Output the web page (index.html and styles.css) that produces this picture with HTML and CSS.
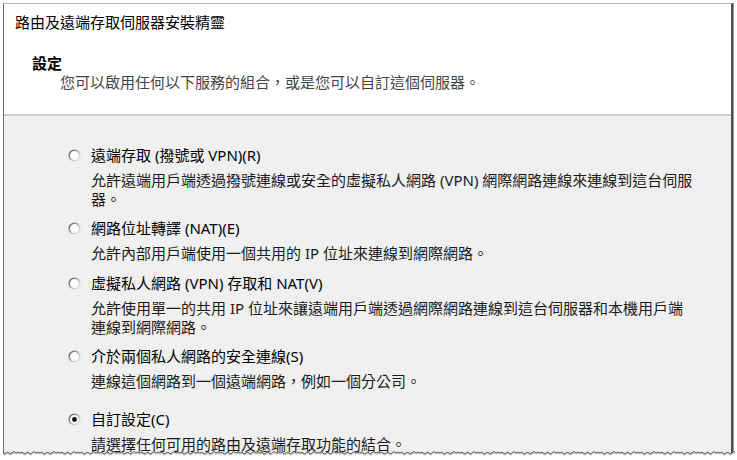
FILE: index.html
```html
<!DOCTYPE html>
<html lang="zh-Hant">
<head>
<meta charset="utf-8">
<title>路由及遠端存取伺服器安裝精靈</title>
<link rel="stylesheet" href="styles.css">
</head>
<body>
<div class="sheet">
  <div class="frame">
    <div class="header">
      <div class="title">路由及遠端存取伺服器安裝精靈</div>
      <div class="heading">設定</div>
      <div class="subtitle">您可以啟用任何以下服務的組合，或是您可以自訂這個伺服器。</div>
    </div>
    <div class="options">
      <div class="opt">
        <div class="opt-row">
          <svg class="radio" width="13" height="13" viewBox="0 0 13 13"><defs><linearGradient id="rg" x1="0" y1="0" x2="1" y2="1"><stop offset="0" stop-color="#555555"/><stop offset="0.5" stop-color="#b0b0b0"/><stop offset="1" stop-color="#f4f4f4"/></linearGradient></defs><circle cx="6.5" cy="6.5" r="5.3" fill="#fbfbfb" stroke="url(#rg)" stroke-width="1.6"/></svg>
          <span class="label">遠端存取 (撥號或 VPN)(R)</span>
        </div>
        <div class="desc">允許遠端用戶端透過撥號連線或安全的虛擬私人網路 (VPN) 網際網路連線來連線到這台伺服<br>器。</div>
      </div>
      <div class="opt opt-after-multi">
        <div class="opt-row">
          <svg class="radio" width="13" height="13" viewBox="0 0 13 13"><circle cx="6.5" cy="6.5" r="5.3" fill="#fbfbfb" stroke="url(#rg)" stroke-width="1.6"/></svg>
          <span class="label">網路位址轉譯 (NAT)(E)</span>
        </div>
        <div class="desc">允許內部用戶端使用一個共用的 IP 位址來連線到網際網路。</div>
      </div>
      <div class="opt">
        <div class="opt-row">
          <svg class="radio" width="13" height="13" viewBox="0 0 13 13"><circle cx="6.5" cy="6.5" r="5.3" fill="#fbfbfb" stroke="url(#rg)" stroke-width="1.6"/></svg>
          <span class="label">虛擬私人網路 (VPN) 存取和 NAT(V)</span>
        </div>
        <div class="desc">允許使用單一的共用 IP 位址來讓遠端用戶端透過網際網路連線到這台伺服器和本機用戶端<br>連線到網際網路。</div>
      </div>
      <div class="opt opt-after-multi">
        <div class="opt-row">
          <svg class="radio" width="13" height="13" viewBox="0 0 13 13"><circle cx="6.5" cy="6.5" r="5.3" fill="#fbfbfb" stroke="url(#rg)" stroke-width="1.6"/></svg>
          <span class="label">介於兩個私人網路的安全連線(S)</span>
        </div>
        <div class="desc">連線這個網路到一個遠端網路，例如一個分公司。</div>
      </div>
      <div class="opt opt-last">
        <div class="opt-row">
          <svg class="radio" width="13" height="13" viewBox="0 0 13 13"><circle cx="6.5" cy="6.5" r="5.3" fill="#fbfbfb" stroke="url(#rg)" stroke-width="1.6"/><circle cx="6.5" cy="6.5" r="2.4" fill="#111"/></svg>
          <span class="label">自訂設定(C)</span>
        </div>
        <div class="desc">請選擇任何可用的路由及遠端存取功能的結合。</div>
      </div>
    </div>
  </div>
  <svg class="torn" width="737" height="9" viewBox="0 0 737 9">
    <defs>
      <pattern id="tear" x="0" y="0" width="20" height="9" patternUnits="userSpaceOnUse">
        <path d="M0 3 L2 2 L4 4 L6 3 L8 2 L10 4 L12 3 L14 1.5 L16 3 L18 2 L20 3 L20 9 L0 9 Z" fill="#ffffff"/>
        <path d="M0 4.2 L2 3.2 L4 5.2 L6 4.2 L8 3.2 L10 5.2 L12 4.2 L14 2.7 L16 4.2 L18 3.2 L20 4.2" fill="none" stroke="#bdbdbd" stroke-width="1"/>
        <path d="M0 3 L2 2 L4 4 L6 3 L8 2 L10 4 L12 3 L14 1.5 L16 3 L18 2 L20 3" fill="none" stroke="#5a5a5a" stroke-width="1"/>
      </pattern>
    </defs>
    <rect x="3" y="0" width="732" height="9" fill="url(#tear)"/>
  </svg>
</div>
</body>
</html>
```

FILE: styles.css
```css
html, body {
  margin: 0;
  padding: 0;
  background: #ffffff;
}

body {
  font-family: "Noto Sans", "Noto Sans CJK TC", sans-serif;
  font-size: 15px;
  color: #111111;
  width: 737px;
  height: 460px;
  overflow: hidden;
}

.sheet {
  position: relative;
  width: 737px;
  height: 460px;
  padding-top: 3px;
  padding-left: 3px;
  box-sizing: border-box;
}

.frame {
  width: 727px;
  height: 452px;
  border-top: 1px solid #b4b4b4;
  border-left: 1px solid #6a6a6a;
  border-right: 2px solid #4e4e4e;
  box-shadow: 1px 0 0 #9a9a9a;
  background: #f0f0f0;
  overflow: hidden;
}

.header {
  box-sizing: border-box;
  height: 112px;
  background: #ffffff;
  border-bottom: 2px solid #cdcdcd;
  padding: 9px 0 0 11px;
}

.title {
  line-height: 18px;
  color: #000000;
  white-space: nowrap;
}

.heading {
  margin-top: 23px;
  margin-left: 17px;
  line-height: 18px;
  font-weight: bold;
  color: #000000;
}

.subtitle {
  margin-top: 1px;
  margin-left: 45px;
  line-height: 19px;
  color: #444444;
  white-space: nowrap;
}

.options {
  padding: 30px 0 0 64px;
}

.opt {
  margin-top: 11px;
}

.opt:first-child {
  margin-top: 0;
}

.opt-after-multi {
  margin-top: 10px;
}

.opt-last {
  margin-top: 19px;
}

.opt-row {
  display: flex;
  align-items: center;
  height: 18px;
}

.radio {
  flex: none;
  margin-right: 10px;
}

.label {
  line-height: 18px;
  color: #000000;
  white-space: nowrap;
}

.desc {
  margin-top: 7px;
  margin-left: 23px;
  line-height: 19px;
  color: #1a1a1a;
  white-space: nowrap;
}

.torn {
  position: absolute;
  left: 0;
  top: 450px;
  display: block;
}
```
